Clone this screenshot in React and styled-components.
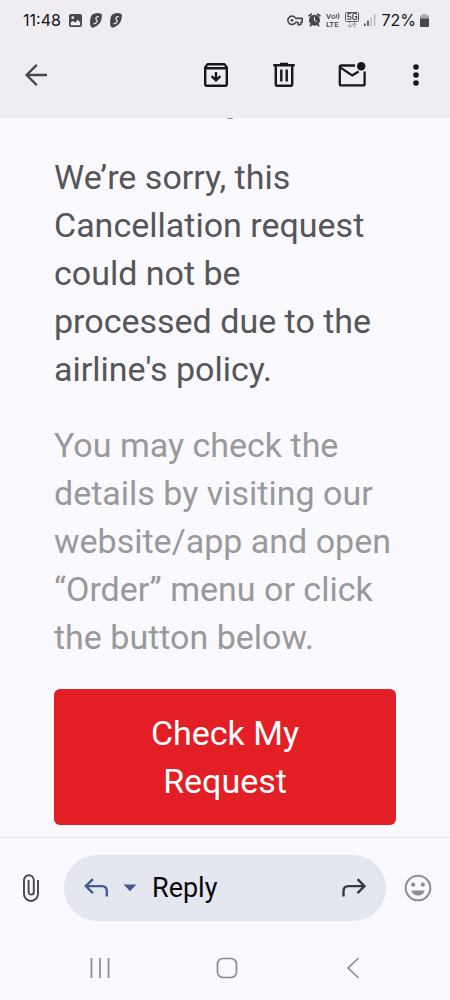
import styled, { createGlobalStyle } from "styled-components";

const GlobalStyle = createGlobalStyle`
  * {
    box-sizing: border-box;
  }

  body {
    margin: 0;
    background: #faf9fe;
    font-family: Roboto, "Noto Sans", sans-serif;
  }

  svg {
    display: block;
    flex: none;
  }
`

const Screen = styled.div`
  display: flex;
  flex-direction: column;
  min-height: 100vh;
`
const Header = styled.header`
  background: #efedf2;
`
const StatusBar = styled.div`
  display: flex;
  justify-content: space-between;
  height: 40px;
  padding: 0 21px 0 23px;
  color: #111;
  font-family: Inter, Roboto, sans-serif;
  font-size: 16px;
`
const StatusGroup = styled.div`
  display: flex;
  align-items: center;
  gap: ${(props) => props.$gap}px;
`
// 배터리 잔량 글자와 아이콘
const BatteryLevel = styled.span`
  display: flex;
  align-items: center;
  gap: 4px;
`
const Toolbar = styled.div`
  display: flex;
  align-items: center;
  justify-content: space-between;
  height: 78px;
  padding: 0 18px 8px 16px;
`
const ToolbarActions = styled.div`
  display: flex;
  gap: 28px;
`
const IconButton = styled.button`
  display: flex;
  align-items: center;
  justify-content: center;
  width: ${(props) => props.$width || 40}px;
  height: 40px;
  padding: 0;
  border: none;
  background: none;
  color: ${(props) => props.$color || '#18171c'};
  cursor: pointer;
`
const Mail = styled.main`
  display: flex;
  flex: 1;
  flex-direction: column;
  gap: 28px;
  padding: 0 54px 12px;
`
// 위로 스크롤된 이전 줄의 끝부분
const ScrolledLine = styled.div`
  align-self: center;
  width: 6px;
  height: 1px;
  margin: 0 0 6px 10px;
  border-radius: 0 0 3px 3px;
  background: #8d8c91;
`
const Message = styled.p`
  margin: 0;
  color: ${(props) => props.$color};
  font-size: 34px;
  line-height: 48px;
`
const RequestButton = styled.button`
  width: 100%;
  padding: 20px 36px;
  border: none;
  border-radius: 6px;
  background: #e31e25;
  color: #fff;
  font-family: inherit;
  font-size: 34px;
  line-height: 48px;
  cursor: pointer;
`
const ReplyBar = styled.footer`
  display: flex;
  align-items: center;
  padding: 17px 12px 0 11px;
  border-top: 1px solid #e8e7ed;
`
const ReplyBox = styled.div`
  display: flex;
  flex: 1;
  align-items: center;
  height: 66px;
  margin: 0 12px 0 13px;
  padding: 0 12px;
  border-radius: 33px;
  background: #e4e7f0;
`
const ReplyButton = styled.button`
  flex: 1;
  padding: 0 8px;
  border: none;
  background: none;
  color: #08080a;
  font-family: inherit;
  font-size: 27px;
  line-height: 40px;
  text-align: left;
  cursor: pointer;
`
const SystemNav = styled.nav`
  display: flex;
  align-items: center;
  justify-content: space-between;
  height: 79px;
  padding: 14px 77px 0 80px;
`

//! ---------------------------- 상태바 아이콘 ----------------------------
const PictureIcon = () => (
  <svg width="13" height="13" viewBox="0 0 13 13">
    <path
      fill="#47464b"
      fillRule="evenodd"
      d="M2 0h9a2 2 0 0 1 2 2v9a2 2 0 0 1-2 2H2a2 2 0 0 1-2-2V2a2 2 0 0 1 2-2zM1.8 8.2v3h9.4V8.6L8.8 5.8 6.2 8.8 4.2 6.9zM3.7 2.2a1.4 1.4 0 1 0 0 2.8 1.4 1.4 0 0 0 0-2.8z"
    />
  </svg>
);

const SharkIcon = () => (
  <svg width="12" height="15" viewBox="0 0 12 15">
    <path fill="#47464b" d="M3.4.9Q7.5-.6 11 .7q1 .4.9 1.5-.1 6-3.2 9.1-2.4 2.5-5.5 3.4Q.7 14.9.3 12.3-.3 8.3.8 3.9 1.4 1.5 3.4.9z" />
    <path fill="none" stroke="#efedf2" strokeWidth="1.2" d="M8.8 3.6Q6 3.4 5.9 5.4q0 .9.8 1.5.9.8.2 2-.8 1.6-3.4 1.9" />
  </svg>
);

const KeyIcon = () => (
  <svg width="16" height="11" viewBox="0 0 16 11" fill="none" stroke="#47464b">
    <path strokeWidth="1.6" strokeLinejoin="round" d="M8.8 3.4A4.2 4.2 0 1 0 8.8 7.2H11V9.6h2.9V7.2h1.3V3.4z" />
    <circle cx="5" cy="5.3" r="1.4" fill="#47464b" stroke="none" />
  </svg>
);

const AlarmIcon = () => (
  <svg width="13" height="14" viewBox="0 0 13 14" stroke="#47464b">
    <circle cx="6.5" cy="7.2" r="5.5" fill="#47464b" stroke="none" />
    <path strokeWidth="1.8" strokeLinecap="round" d="M1.2 2.8 3.3 1.2M11.8 2.8 9.7 1.2M2.4 12.6l1-1.2M10.6 12.6l-1-1.2" />
    <path fill="none" stroke="#efedf2" d="M6.5 4.2v3.3l2.2 1.1" />
  </svg>
);

const VolteIcon = () => (
  <svg width="14" height="16" viewBox="0 0 14 16" fill="#47464b">
    <text x="0" y="7" fontFamily="Roboto" fontSize="8" fontWeight="500">Vo</text>
    <text x="0" y="15" fontFamily="Roboto" fontSize="8" fontWeight="500">LTE</text>
    <path fill="none" stroke="#47464b" d="M10 2.2q1.4 1.8 0 4M12 1q2.2 3 0 6.2" />
  </svg>
);

const FiveGIcon = () => (
  <svg width="14" height="17" viewBox="0 0 14 17">
    <rect x=".5" y=".5" width="13" height="9" rx="1" fill="none" stroke="#57565b" />
    <text x="7" y="8" textAnchor="middle" fill="#47464b" fontFamily="Roboto" fontSize="9" fontWeight="500">5G</text>
    <path fill="none" stroke="#b1b0b5" strokeWidth="1.2" d="M4.8 10v5.4M2.6 13.2l2.2 2.3L7 13.2M9.4 16v-5.2M7.2 13l2.2-2.3 2.2 2.3" />
  </svg>
);

const SignalIcon = () => (
  <svg width="12" height="12" viewBox="0 0 12 12">
    <path fill="#47464b" d="M0 9.5h1.6V12H0zM3.2 6.5h1.6V12H3.2z" />
    <path fill="#bcbbc0" d="M6.4 3.2H8V12H6.4zM9.8 0h1.6v12H9.8z" />
  </svg>
);

const BatteryIcon = () => (
  <svg width="9" height="13" viewBox="0 0 9 13">
    <path fill="#a9a8ad" d="M2.6 0h3.8v1.3H8a1 1 0 0 1 1 1V5H0V2.3a1 1 0 0 1 1-1h1.6z" />
    <path fill="#47464b" d="M0 4.4h9V12a1 1 0 0 1-1 1H1a1 1 0 0 1-1-1z" />
  </svg>
);

//! ---------------------------- 메일 아이콘 ----------------------------
const BackIcon = () => (
  <svg width="24" height="24" viewBox="0 0 24 24" fill="none" stroke="#47464b" strokeWidth="2.3">
    <path d="M23 12H3M12.8 1.9 2.6 12l10.2 10.1" />
  </svg>
);

const ArchiveIcon = () => (
  <svg width="26" height="26" viewBox="0 0 26 26" fill="none" stroke="currentColor" strokeWidth="2.4">
    <path strokeLinejoin="round" d="M2.2 5.4 4.6 2.2h16.8l2.4 3.2v17.2a1.2 1.2 0 0 1-1.2 1.2H3.4a1.2 1.2 0 0 1-1.2-1.2zM2.2 6.3h21.6" />
    <path d="M13 10v8M8.6 14.1l4.4 4.2 4.4-4.2" />
  </svg>
);

const TrashIcon = () => (
  <svg width="24" height="26" viewBox="0 0 24 26" fill="none" stroke="currentColor" strokeWidth="2.4">
    <path d="M1.3 3.2h21.4M8 2h8" />
    <path strokeLinejoin="round" d="M3.8 3.6v18.9a1.3 1.3 0 0 0 1.3 1.3h13.8a1.3 1.3 0 0 0 1.3-1.3V3.6" />
    <path d="M9.3 7.6v12M14.7 7.6v12" />
  </svg>
);

const UnreadIcon = () => (
  <svg width="28" height="26" viewBox="0 0 28 26" fill="none" stroke="currentColor" strokeWidth="2.3">
    <path d="M17 3.5H3.2a1.4 1.4 0 0 0-1.4 1.4v17a1.4 1.4 0 0 0 1.4 1.4h22a1.4 1.4 0 0 0 1.4-1.4V9.6" />
    <path d="m2.2 5.4 12 8L20.6 9.4" />
    <circle cx="23.2" cy="4.2" r="4.2" fill="currentColor" stroke="none" />
  </svg>
);

const MoreIcon = () => (
  <svg width="6" height="22" viewBox="0 0 6 22" fill="currentColor">
    <circle cx="3" cy="3" r="2.8" />
    <circle cx="3" cy="11" r="2.8" />
    <circle cx="3" cy="19" r="2.8" />
  </svg>
);

const ClipIcon = () => (
  <svg width="18" height="28" viewBox="0 0 18 28" fill="none" stroke="currentColor" strokeWidth="1.9">
    <path d="M16 6v14a7 7 0 0 1-14 0V6.2a4.9 4.9 0 0 1 9.8 0V18a2.6 2.6 0 0 1-5.2 0V6" />
  </svg>
);

const ReplyIcon = () => (
  <svg width="24" height="20" viewBox="0 0 24 20" fill="none" stroke="currentColor" strokeWidth="2.4">
    <path d="M8.9 1.1 1.8 8.1l7.1 7.1M1.8 8.1h16q5 0 5 5v5.5" />
  </svg>
);

const ForwardIcon = () => (
  <svg width="24" height="20" viewBox="0 0 24 20" fill="none" stroke="currentColor" strokeWidth="2.4">
    <path d="M15.5 1.1l7 7-7 7M22.5 8.1h-16q-5 0-5 5v5.5" />
  </svg>
);

const CaretIcon = () => (
  <svg width="14" height="8" viewBox="0 0 14 8" fill="currentColor">
    <path d="M.6.6h12.8L7 7.2z" />
  </svg>
);

const SmileIcon = () => (
  <svg width="28" height="28" viewBox="0 0 28 28" fill="currentColor">
    <circle cx="14" cy="14" r="12.3" fill="none" stroke="currentColor" strokeWidth="2.1" />
    <circle cx="9.2" cy="10.7" r="2.1" />
    <circle cx="18.8" cy="10.7" r="2.1" />
    <path d="M7.2 16.4h13.6q-1.7 5-6.8 5t-6.8-5z" />
  </svg>
);

const RecentsIcon = () => (
  <svg width="20" height="20" viewBox="0 0 20 20" stroke="currentColor" strokeWidth="1.7">
    <path d="M1.5 0v20M10 0v20M18.5 0v20" />
  </svg>
);

const HomeIcon = () => (
  <svg width="22" height="22" viewBox="0 0 22 22" fill="none" stroke="currentColor" strokeWidth="1.7">
    <rect x="1.5" y="1.5" width="19" height="19" rx="5.5" />
  </svg>
);

const NavBackIcon = () => (
  <svg width="14" height="22" viewBox="0 0 14 22" fill="none" stroke="currentColor" strokeWidth="1.6">
    <path d="M12.6 1 2 11l10.6 10" />
  </svg>
);

export default function App() {
  return (
    <Screen>
      <GlobalStyle />
      <Header>
        <StatusBar>
          <StatusGroup $gap={8}>
            <span>11:48</span>
            <PictureIcon />
            <SharkIcon />
            <SharkIcon />
          </StatusGroup>
          <StatusGroup $gap={5}>
            <KeyIcon />
            <AlarmIcon />
            <VolteIcon />
            <FiveGIcon />
            <SignalIcon />
            <BatteryLevel>72% <BatteryIcon /></BatteryLevel>
          </StatusGroup>
        </StatusBar>
        <Toolbar>
          <IconButton aria-label="Back"><BackIcon /></IconButton>
          <ToolbarActions>
            <IconButton aria-label="Archive"><ArchiveIcon /></IconButton>
            <IconButton aria-label="Delete"><TrashIcon /></IconButton>
            <IconButton aria-label="Mark as unread"><UnreadIcon /></IconButton>
            <IconButton aria-label="More options" $width={32}><MoreIcon /></IconButton>
          </ToolbarActions>
        </Toolbar>
      </Header>

      <Mail>
        <ScrolledLine />
        <Message $color="#565558">
          We’re sorry, this Cancellation request could not be processed due to the airline's policy.
        </Message>
        <Message $color="#99989b">
          You may check the details by visiting our website/app and open “Order” menu or click the button below.
        </Message>
        <RequestButton>Check My Request</RequestButton>
      </Mail>

      <ReplyBar>
        <IconButton aria-label="Attach file" $color="#47464b"><ClipIcon /></IconButton>
        <ReplyBox>
          <IconButton aria-label="Reply" $color="#415b91"><ReplyIcon /></IconButton>
          <IconButton aria-label="Reply options" $width={28} $color="#415b91"><CaretIcon /></IconButton>
          <ReplyButton>Reply</ReplyButton>
          <IconButton aria-label="Forward" $color="#38383d"><ForwardIcon /></IconButton>
        </ReplyBox>
        <IconButton aria-label="Add reaction" $color="#8f8e93"><SmileIcon /></IconButton>
      </ReplyBar>

      <SystemNav>
        <IconButton aria-label="Recent apps" $color="#8a898e"><RecentsIcon /></IconButton>
        <IconButton aria-label="Home" $color="#8a898e"><HomeIcon /></IconButton>
        <IconButton aria-label="Go back" $color="#8a898e"><NavBackIcon /></IconButton>
      </SystemNav>
    </Screen>
  );
}
